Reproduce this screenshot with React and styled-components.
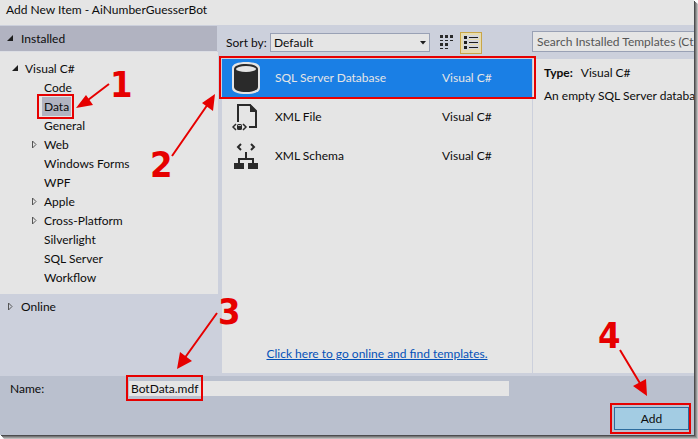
import React from "react";
import styled, { createGlobalStyle } from "styled-components";

const Global = createGlobalStyle`
  *, *::before, *::after { box-sizing: border-box; }
  body { margin: 0; background: #fff; }
  body, button, input, select {
    font-family: Lato, "Open Sans", sans-serif;
    font-size: 12px;
    line-height: 19px;
    color: #0c0c0c;
  }
`;

const Page = styled.div`
  position: relative;
  min-height: 100vh;
  padding: 0 4px 4px 0;
  display: flex;
  overflow: hidden;
`;

const Dialog = styled.main`
  flex: 1;
  min-width: 0;
  display: flex;
  flex-direction: column;
  background: #ccd0dc;
  box-shadow: 1px 1px 0 #4c4c4e, 2px 2px 0 #777, 3px 3px 1px #999, 4px 4px 1px #c4c4c4;
`;

const TitleBar = styled.header`
  height: 25px;
  padding: 0 6px;
  background: #e5e5e5;
`;

const Title = styled.h1`
  margin: 0;
  font-size: 12px;
  font-weight: 400;
  line-height: 19px;
`;

const Body = styled.div`
  flex: 1;
  display: grid;
  grid-template-columns: 218px minmax(0, 1fr) 162px;
  padding-bottom: 3px;
`;

const Sidebar = styled.nav`
  padding-top: 1px;
`;

const Section = styled.button`
  display: flex;
  align-items: center;
  gap: 7px;
  width: ${(p) => (p.$active ? "217px" : "100%")};
  height: 26px;
  padding: 0 6px;
  border: 0;
  border-bottom: 1px solid ${(p) => (p.$active ? "#dcdee4" : "transparent")};
  background: ${(p) => (p.$active ? "#b1b3c1" : "transparent")};
  text-align: left;
`;

const Tree = styled.ul`
  margin: 0;
  padding: 7px 0 7px;
  list-style: none;
  background: #e5e5e5;
`;

const Node = styled.li`
  display: flex;
  align-items: center;
  gap: 4px;
  height: 19px;
  padding-left: ${(p) => (p.$root ? "11px" : "30px")};
`;

const NodeLabel = styled.button`
  height: 19px;
  padding: 0 2px;
  border: 0;
  line-height: 19px;
  background: ${(p) => (p.$selected ? "#b1b3c1" : "transparent")};
`;

const Glyph = styled.svg`
  flex: none;
  display: block;
`;

const Center = styled.section`
  display: flex;
  flex-direction: column;
  padding-left: 4px;
`;

const Toolbar = styled.div`
  display: flex;
  align-items: center;
  height: 34px;
  padding: 1px 0 0 4px;
`;

const SortLabel = styled.label`
  width: 44px;
  white-space: nowrap;
`;

const SelectWrap = styled.span`
  position: relative;
  width: 160px;
  height: 19px;
`;

const Select = styled.select`
  appearance: none;
  display: block;
  width: 100%;
  height: 19px;
  padding: 0 3px;
  border: 1px solid #99a1b5;
  border-radius: 0;
  background: #e5e5e5;
  line-height: 17px;
`;

const Caret = styled.svg`
  position: absolute;
  right: 4px;
  top: 8px;
  pointer-events: none;
`;

const ViewButton = styled.button`
  display: grid;
  place-items: center;
  width: 22px;
  height: 22px;
  margin-left: 6px;
  padding: 0;
  border: 1px solid ${(p) => (p.$active ? "#c9a648" : "transparent")};
  background: ${(p) => (p.$active ? "#e7dcae" : "transparent")};
  & + & { margin-left: 2px; }
`;

const Results = styled.div`
  flex: 1;
  display: flex;
  flex-direction: column;
  justify-content: space-between;
  background: #e5e5e5;
`;

const List = styled.ul`
  margin: 0;
  padding: 0;
  list-style: none;
`;

const Item = styled.li`
  display: grid;
  grid-template-columns: 43px minmax(0, 1fr) 90px;
  align-items: center;
  height: 38px;
  margin-bottom: 1px;
  padding-left: 10px;
  background: ${(p) => (p.$selected ? "#1a7fe5" : "transparent")};
  color: ${(p) => (p.$selected ? "#e5e5e5" : "#0c0c0c")};
`;

const ItemText = styled.span`
  padding-bottom: 2px;
`;

const OnlineLink = styled.a`
  align-self: center;
  margin-bottom: 10px;
  color: #0451b8;
  text-decoration: underline;
  white-space: nowrap;
`;

const Details = styled.aside`
  display: flex;
  flex-direction: column;
  overflow: hidden;
`;

const SearchBar = styled.div`
  height: 34px;
  padding-top: 6px;
`;

const Search = styled.input`
  display: block;
  width: 100%;
  height: 21px;
  padding: 0 0 0 4px;
  border: 1px solid #99a1b5;
  border-right: 0;
  border-radius: 0;
  background: #e5e5e5;
  &::placeholder { color: #555; opacity: 1; }
`;

const Info = styled.div`
  flex: 1;
  margin-left: 1px;
  padding: 4px 0 0 11px;
  background: #e5e5e5;
  white-space: nowrap;
`;

const Line = styled.p`
  display: flex;
  gap: 8px;
  margin: 0 0 4px;
`;

const Footer = styled.footer`
  display: flex;
  justify-content: space-between;
  height: 59px;
  padding: 5px 5px 5px 10px;
  background: #bac0ce;
`;

const Field = styled.div`
  display: flex;
  height: 15px;
`;

const FieldLabel = styled.label`
  width: 119px;
  line-height: 15px;
`;

const NameInput = styled.input`
  width: 380px;
  height: 15px;
  padding: 0 2px;
  border: 0;
  background: #e5e5e5;
  line-height: 15px;
`;

const AddButton = styled.button`
  align-self: flex-end;
  width: 75px;
  height: 23px;
  padding: 0;
  border: 1px solid #2c6c9e;
  background: #a3cce3;
  line-height: 21px;
`;

const Overlay = styled.svg`
  position: absolute;
  left: 0;
  top: 0;
  pointer-events: none;
  font: 700 36px "DejaVu Sans Condensed", "DejaVu Sans", sans-serif;
`;

const Arrow = ({ open, hidden }) => (
  <Glyph width="8" height="9" viewBox="0 0 8 9" aria-hidden="true">
    {!hidden && (open
      ? <path d="M7 1v6H1z" fill="#1e1e1e" />
      : <path d="M2.5 1v7l3.5-3.5z" fill="none" stroke="#555" />)}
  </Glyph>
);

const DatabaseIcon = () => (
  <Glyph width="28" height="32" viewBox="0 0 28 32" aria-hidden="true">
    <path d="M0 6C0 2 6 0 14 0s14 2 14 6v20c0 4-6 6-14 6S0 30 0 26z" fill="#e5e5e5" />
    <path d="M2 7c0-3 5-5 12-5s12 2 12 5v18c0 3-5 5-12 5S2 28 2 25z" fill="#2a2a2a" />
    <ellipse cx="14" cy="7" rx="10" ry="3" fill="#e5e5e5" />
  </Glyph>
);

const FileIcon = () => (
  <Glyph width="28" height="28" viewBox="0 0 28 28" aria-hidden="true">
    <path d="M6 19V2h12l6 6v16h-7" fill="none" stroke="#2a2a2a" strokeWidth="2" />
    <path d="M18 1v8h7z" fill="#2a2a2a" />
    <path d="M4 21l-3 3 3 3M11 21l3 3-3 3" fill="none" stroke="#2a2a2a" strokeWidth="1.5" />
    <rect x="5" y="21" width="5" height="6" rx="1.5" fill="#2a2a2a" />
    <path d="M6 22.5h3" stroke="#bbb" />
  </Glyph>
);

const SchemaIcon = () => (
  <Glyph width="28" height="28" viewBox="0 0 28 28" aria-hidden="true">
    <path d="M9 2L6 5l3 3M19 2l3 3-3 3" fill="none" stroke="#2a2a2a" strokeWidth="2" />
    <path d="M14 10v6M7 21v-4h14v4" fill="none" stroke="#2a2a2a" strokeWidth="2" />
    <path d="M2 21h10v6H2zM16 21h10v6H16z" fill="#2a2a2a" />
  </Glyph>
);

const nodes = [
  { label: "Visual C#", root: true, open: true },
  { label: "Code" },
  { label: "Data", selected: true },
  { label: "General" },
  { label: "Web", branch: true },
  { label: "Windows Forms" },
  { label: "WPF" },
  { label: "Apple", branch: true },
  { label: "Cross-Platform", branch: true },
  { label: "Silverlight" },
  { label: "SQL Server" },
  { label: "Workflow" },
];

const templates = [
  { name: "SQL Server Database", icon: <DatabaseIcon />, selected: true },
  { name: "XML File", icon: <FileIcon /> },
  { name: "XML Schema", icon: <SchemaIcon /> },
];

const Callouts = () => (
  <Overlay width="698" height="439" viewBox="0 0 698 439">
    <g fill="none" stroke="#e60000" strokeWidth="2">
      <rect x="38" y="95" width="35" height="23" />
      <rect x="220" y="57" width="315" height="41" />
      <rect x="127" y="376" width="75" height="24" />
      <rect x="611" y="404" width="79" height="29" />
      <path d="M109 84L88 100M172 156L208 104M217 313L184 359M620 350L641 385" />
    </g>
    <g fill="#e60000">
      <path d="M76 108l10-13 7 10zM215 94l-2 17-11-8zM177 369l3-17 12 9zM647 396l-14-10 13-7z" />
      <text x="110" y="97">1</text>
      <text x="150" y="177">2</text>
      <text x="218" y="324">3</text>
      <text x="598" y="348">4</text>
    </g>
  </Overlay>
);

export default function App() {
  return (
    <Page>
      <Global />
      <Dialog>
        <TitleBar><Title>Add New Item - AiNumberGuesserBot</Title></TitleBar>
        <Body>
          <Sidebar>
            <Section $active aria-expanded="true"><Arrow open />Installed</Section>
            <Tree>
              {nodes.map((n) => (
                <Node key={n.label} $root={n.root}>
                  <Arrow open={n.open} hidden={!n.open && !n.branch} />
                  <NodeLabel $selected={n.selected}>{n.label}</NodeLabel>
                </Node>
              ))}
            </Tree>
            <Section aria-expanded="false"><Arrow />Online</Section>
          </Sidebar>
          <Center>
            <Toolbar>
              <SortLabel htmlFor="sort">Sort by:</SortLabel>
              <SelectWrap>
                <Select id="sort" defaultValue="Default"><option>Default</option></Select>
                <Caret width="6" height="4" viewBox="0 0 6 4"><path d="M0 0h6L3 3.500z" fill="#1e1e1e" /></Caret>
              </SelectWrap>
              <ViewButton aria-label="Small icons">
                <Glyph width="14" height="15" viewBox="0 0 14 15">
                  <path d="M0 0h3v3H0zM5 0h3v3H5zM10 0h3v3h-3zM0 8h3v3H0zM5 8h3v3H5zM0 5h3v1H0zM5 5h3v1H5zM10 5h3v1h-3zM0 13h3v1H0zM5 13h3v1H5z" fill="#2a2a2a" />
                </Glyph>
              </ViewButton>
              <ViewButton $active aria-label="Medium icons">
                <Glyph width="16" height="15" viewBox="0 0 16 15">
                  <path d="M0 0h5v15H0zM5 0h11v4H5zM5 5h11v4H5zM5 10h11v4H5z" fill="#d5d6dc" />
                  <path d="M1 1h3v3H1zM1 6h3v3H1zM1 11h3v3H1zM6 2h9v1H6zM6 7h9v1H6zM6 12h9v1H6z" fill="#1e1e1e" />
                </Glyph>
              </ViewButton>
            </Toolbar>
            <Results>
              <List>
                {templates.map((t) => (
                  <Item key={t.name} $selected={t.selected}>
                    {t.icon}<ItemText>{t.name}</ItemText><ItemText>Visual C#</ItemText>
                  </Item>
                ))}
              </List>
              <OnlineLink href="#online">Click here to go online and find templates.</OnlineLink>
            </Results>
          </Center>
          <Details>
            <SearchBar>
              <Search aria-label="Search Installed Templates" placeholder="Search Installed Templates (Ct" />
            </SearchBar>
            <Info>
              <Line><strong>Type:</strong><span>Visual C#</span></Line>
              <Line>An empty SQL Server databa</Line>
            </Info>
          </Details>
        </Body>
        <Footer>
          <Field>
            <FieldLabel htmlFor="name">Name:</FieldLabel>
            <NameInput id="name" defaultValue="BotData.mdf" />
          </Field>
          <AddButton>Add</AddButton>
        </Footer>
      </Dialog>
      <Callouts />
    </Page>
  );
}
